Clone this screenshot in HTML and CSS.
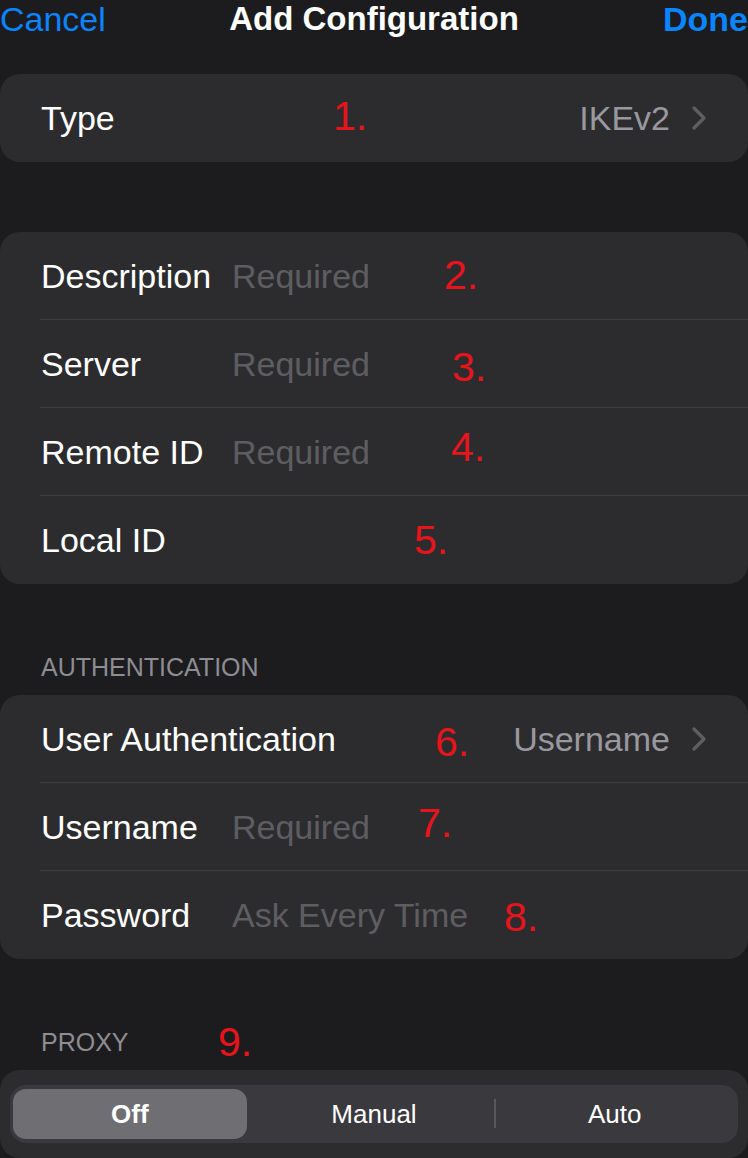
FILE: index.html
```html
<!DOCTYPE html>
<html lang="en">
<head>
  <meta charset="UTF-8">
  <meta name="viewport" content="width=device-width, initial-scale=1.0">
  <title>Add Configuration</title>
  <link rel="stylesheet" href="styles.css">
</head>
<body>
  <div class="nav-bar">
    <span class="nav-button">Cancel</span>
    <h1>Add Configuration</h1>
    <span class="nav-button done">Done</span>
  </div>

  <div class="group first">
    <div class="row">
      <span class="label">Type</span>
      <span class="value">IKEv2</span>
      <svg class="chevron" width="14" height="24" viewBox="0 0 14 24"><polyline points="2,2 12,12 2,22" /></svg>
    </div>
  </div>

  <div class="group">
    <div class="row">
      <span class="label">Description</span>
      <span class="placeholder">Required</span>
    </div>
    <div class="row">
      <span class="label">Server</span>
      <span class="placeholder">Required</span>
    </div>
    <div class="row">
      <span class="label">Remote ID</span>
      <span class="placeholder">Required</span>
    </div>
    <div class="row">
      <span class="label">Local ID</span>
    </div>
  </div>

  <div class="section-title">AUTHENTICATION</div>
  <div class="group">
    <div class="row">
      <span class="label wide">User Authentication</span>
      <span class="value">Username</span>
      <svg class="chevron" width="14" height="24" viewBox="0 0 14 24"><polyline points="2,2 12,12 2,22" /></svg>
    </div>
    <div class="row">
      <span class="label">Username</span>
      <span class="placeholder">Required</span>
    </div>
    <div class="row">
      <span class="label">Password</span>
      <span class="placeholder">Ask Every Time</span>
    </div>
  </div>

  <div class="section-title">PROXY</div>
  <div class="group segment-group">
    <div class="segmented">
      <span class="segment selected">Off</span>
      <span class="segment">Manual</span>
      <span class="segment divided">Auto</span>
    </div>
  </div>

  <!-- red step numbers drawn over the screenshot -->
  <span class="step" style="left: 333px; top: 96px;">1.</span>
  <span class="step" style="left: 444px; top: 255px;">2.</span>
  <span class="step" style="left: 452px; top: 347px;">3.</span>
  <span class="step" style="left: 451px; top: 427px;">4.</span>
  <span class="step" style="left: 414px; top: 520px;">5.</span>
  <span class="step" style="left: 435px; top: 722px;">6.</span>
  <span class="step" style="left: 418px; top: 803px;">7.</span>
  <span class="step" style="left: 504px; top: 897px;">8.</span>
  <span class="step" style="left: 218px; top: 1022px;">9.</span>
</body>
</html>
```

FILE: styles.css
```css
body {
  margin: 0;
  background-color: #1c1c1e;
  color: #ffffff;
  font-family: "Liberation Sans", Arial, sans-serif;
  width: 748px;
  height: 1158px;
  overflow: hidden;
  position: relative;
}
.nav-bar {
  display: flex;
  justify-content: space-between;
  align-items: center;
  height: 38px;
  margin-bottom: 36px;
}
.nav-bar h1 {
  margin: 0;
  font-size: 33px;
  font-weight: bold;
  line-height: 38px;
}
.nav-button {
  color: #0a84ff;
  font-size: 34px;
  line-height: 38px;
  width: 150px;
}
.nav-button.done {
  font-weight: bold;
  text-align: right;
}
.group {
  background-color: #2c2c2e;
  border-radius: 20px;
  margin-bottom: 70px;
}
.row {
  display: flex;
  align-items: center;
  box-sizing: border-box;
  height: 88px;
  margin-left: 40px;
  padding-left: 1px;
  padding-right: 42px;
  border-bottom: 1px solid #3d3d41;
  font-size: 34px;
  line-height: 40px;
}
.row:last-child {
  border-bottom: none;
}
.label {
  width: 191px;
  flex-shrink: 0;
}
.label.wide {
  width: auto;
}
.placeholder {
  color: #5e5e62;
}
.value {
  margin-left: auto;
  color: #98989e;
}
.chevron {
  margin-left: 22px;
  fill: none;
  stroke: #5e5e62;
  stroke-width: 3.2;
  stroke-linecap: round;
  stroke-linejoin: round;
}
.section-title {
  color: #8d8d93;
  font-size: 25px;
  line-height: 30px;
  padding-left: 41px;
  margin-top: -2px;
  margin-bottom: 13px;
}
.segment-group {
  padding: 15px 10px;
  margin-bottom: 0;
}
.segmented {
  display: grid;
  grid-template-columns: repeat(3, 1fr);
  height: 58px;
  box-sizing: border-box;
  padding: 4px 3px;
  background-color: #3a3a3e;
  border-radius: 16px;
}
.segment {
  position: relative;
  display: flex;
  align-items: center;
  justify-content: center;
  font-size: 26px;
}
.segment.selected {
  background-color: #6e6e73;
  border-radius: 13px;
  font-weight: bold;
  margin-right: 7px;
}
.segment.divided::before {
  content: "";
  position: absolute;
  left: 0;
  top: 10px;
  bottom: 11px;
  width: 2px;
  background-color: #58585c;
}
.step {
  position: absolute;
  color: #e8141c;
  font-family: "Liberation Sans", Arial, sans-serif;
  font-size: 41px;
  line-height: 41px;
}
```
